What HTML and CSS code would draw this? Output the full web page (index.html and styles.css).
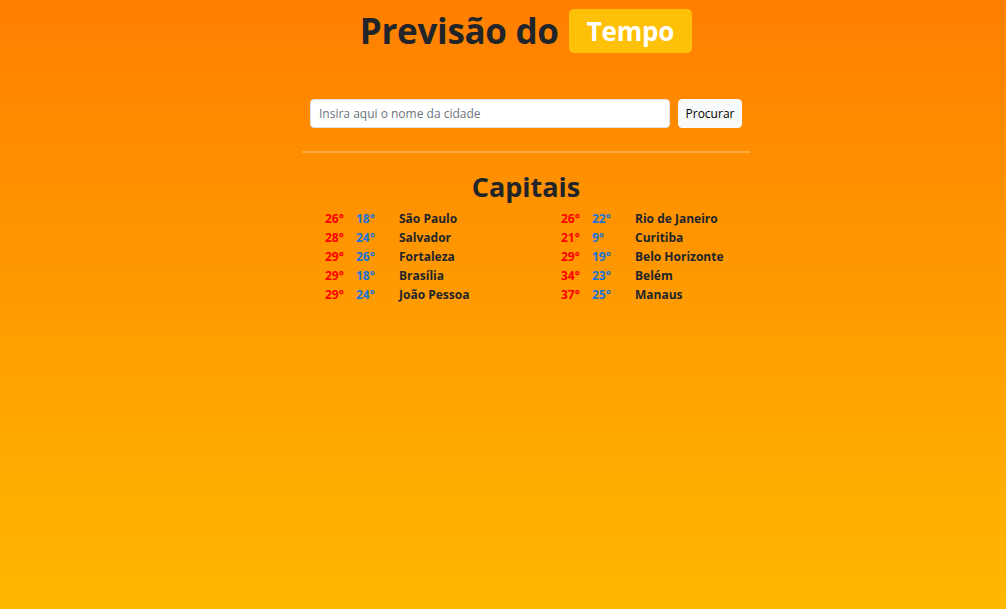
FILE: index.html
```html
<!DOCTYPE html>
<html lang="pt-BR">
<head>
<meta charset="utf-8">
<title>Previsão do Tempo</title>
<link rel="stylesheet" href="styles.css">
</head>
<body>
<main class="page">
  <header class="title-row">
    <h1 class="title">Previsão do <span class="badge">Tempo</span></h1>
  </header>
  <form class="search">
    <input class="search-input" type="text" placeholder="Insira aqui o nome da cidade">
    <button class="search-btn" type="button">Procurar</button>
  </form>
  <hr class="divider">
  <section class="capitals">
    <h2 class="capitals-title">Capitais</h2>
    <div class="lists">
      <ul class="list">
        <li class="row"><span class="max">26°</span><span class="min">18°</span><span class="city">São Paulo</span></li>
        <li class="row"><span class="max">28°</span><span class="min">24°</span><span class="city">Salvador</span></li>
        <li class="row"><span class="max">29°</span><span class="min">26°</span><span class="city">Fortaleza</span></li>
        <li class="row"><span class="max">29°</span><span class="min">18°</span><span class="city">Brasília</span></li>
        <li class="row"><span class="max">29°</span><span class="min">24°</span><span class="city">João Pessoa</span></li>
      </ul>
      <ul class="list">
        <li class="row"><span class="max">26°</span><span class="min">22°</span><span class="city">Rio de Janeiro</span></li>
        <li class="row"><span class="max">21°</span><span class="min">9°</span><span class="city">Curitiba</span></li>
        <li class="row"><span class="max">29°</span><span class="min">19°</span><span class="city">Belo Horizonte</span></li>
        <li class="row"><span class="max">34°</span><span class="min">23°</span><span class="city">Belém</span></li>
        <li class="row"><span class="max">37°</span><span class="min">25°</span><span class="city">Manaus</span></li>
      </ul>
    </div>
  </section>
</main>
</body>
</html>
```

FILE: styles.css
```css
html, body {
  margin: 0;
  padding: 0;
  height: 100%;
}
body {
  background: linear-gradient(to bottom, #ff7f00, #ffb800);
  font-family: "Open Sans", "Noto Sans", sans-serif;
  color: #212529;
  padding-left: 46px;
  box-sizing: border-box;
}
.page {
  width: 448px;
  margin: 0 auto;
  padding-top: 9px;
}
.title-row {
  display: flex;
  justify-content: center;
}
.title {
  margin: 0;
  font-size: 35px;
  font-weight: 700;
  line-height: 44px;
  display: flex;
  align-items: center;
  gap: 10px;
  letter-spacing: -0.3px;
}
.badge {
  background: #ffc107;
  color: #fff;
  font-size: 26px;
  line-height: 44px;
  padding: 0 18px;
  border-radius: 5px;
  letter-spacing: -0.2px;
}
.search {
  display: flex;
  gap: 8px;
  margin: 46px 8px 0 8px;
}
.search-input {
  flex: 0 0 360px;
  box-sizing: border-box;
  height: 29px;
  border: 1px solid #dee2e6;
  border-radius: 4px;
  padding: 0 8px;
  font-family: inherit;
  font-size: 12px;
  color: #212529;
  background: #fff;
}
.search-input::placeholder {
  color: #6c757d;
}
.search-btn {
  box-sizing: border-box;
  height: 29px;
  width: 64px;
  border: 1px solid #f8f9fa;
  border-radius: 4px;
  background: #f8f9fa;
  font-family: inherit;
  font-size: 12px;
  color: #000;
  padding: 0;
}
.divider {
  border: 0;
  border-top: 2px solid rgba(255,255,255,0.25);
  margin: 23px 0 0 0;
}
.capitals-title {
  margin: 14px 0 0 0;
  text-align: center;
  font-size: 27px;
  font-weight: 700;
  line-height: 40px;
}
.lists {
  display: grid;
  grid-template-columns: 236px 1fr;
  padding-left: 23px;
  margin-top: 2px;
}
.list {
  list-style: none;
  margin: 0;
  padding: 0;
}
.row {
  display: grid;
  grid-template-columns: 31px 43px auto;
  font-size: 12px;
  font-weight: 700;
  line-height: 19px;
}
.max { color: #ff0000; }
.min { color: #1a73d6; }
.city { color: #212529; }
```
